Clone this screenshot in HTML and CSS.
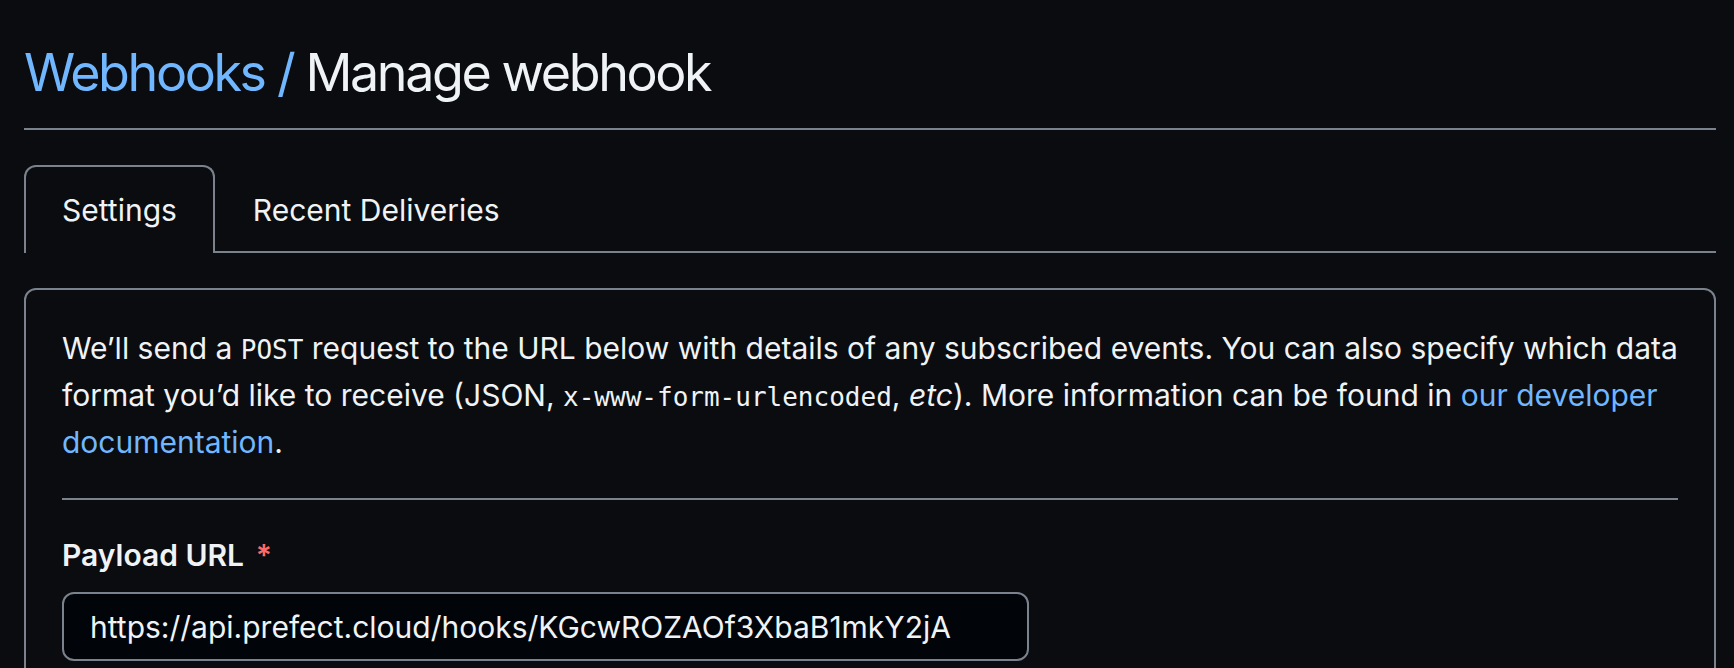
FILE: index.html
```html
<!DOCTYPE html>
<html lang="en">
<head>
<meta charset="utf-8">
<title>Manage webhook</title>
<link rel="stylesheet" href="styles.css">
</head>
<body>
<main class="page">
  <div class="subhead">
    <h2 class="subhead-heading"><a class="crumb" href="#">Webhooks</a><span class="crumb-sep"> / </span>Manage webhook</h2>
  </div>
  <nav class="tabnav">
    <a class="tab tab-selected" href="#">Settings</a>
    <a class="tab" href="#">Recent Deliveries</a>
  </nav>
  <section class="box">
    <p class="intro">We’ll send a <code>POST</code> request to the URL below with details of any subscribed events. You can also specify which data format you’d like to receive (JSON, <code>x-www-form-urlencoded</code>, <em>etc</em>). More information can be found in <a class="link" href="#">our developer documentation</a>.</p>
    <hr class="divider">
    <div class="form-group">
      <label class="form-label" for="url">Payload URL <span class="required">*</span></label>
      <input class="form-control" id="url" type="text" value="https://api.prefect.cloud/hooks/KGcwROZAOf3XbaB1mkY2jA">
    </div>
  </section>
</main>
</body>
</html>
```

FILE: styles.css
```css
html, body {
  margin: 0;
  padding: 0;
  background: #0a0c10;
  overflow: hidden;
}
body {
  color: #f0f3f6;
  font-family: Inter, "Noto Sans", "Liberation Sans", sans-serif;
  font-size: 30px;
  line-height: 45px;
}
.page {
  margin: 0 18px 0 24px;
}
.subhead {
  padding-top: 40px;
  padding-bottom: 23px;
  border-bottom: 2px solid #7a828e;
}
.subhead-heading {
  margin: 0;
  font-size: 52px;
  line-height: 65px;
  font-weight: 400;
  letter-spacing: -2.4px;
}
.crumb, .crumb-sep {
  color: #71b7ff;
  text-decoration: none;
}
.tabnav {
  display: flex;
  margin-top: 35px;
  border-bottom: 2px solid #7a828e;
}
.tab {
  display: block;
  padding: 18px 36px 16px;
  line-height: 50px;
  color: #f0f3f6;
  text-decoration: none;
  border: 2px solid transparent;
  border-bottom: 0;
  border-radius: 12px 12px 0 0;
  margin-bottom: -2px;
}
.tab-selected {
  border-color: #7a828e;
  background: #0a0c10;
  padding-bottom: 18px;
}
.box {
  margin-top: 35px;
  border: 2px solid #7a828e;
  border-radius: 12px;
  padding: 36px 36px 60px;
}
.intro {
  margin: 0;
}
code {
  font-family: "DejaVu Sans Mono", "Liberation Mono", monospace;
  font-size: 26px;
}
.link {
  color: #71b7ff;
  text-decoration: none;
}
.divider {
  margin: 33px 0 0;
  border: 0;
  height: 2px;
  background: #7a828e;
}
.form-group {
  margin-top: 33px;
}
.form-label {
  display: block;
  font-weight: 600;
  margin-bottom: 14px;
}
.required {
  color: #ff6a69;
  margin-left: 4px;
}
.form-control {
  display: block;
  box-sizing: border-box;
  width: 967px;
  height: 69px;
  padding: 0 26px;
  background: #010409;
  color: #f0f3f6;
  border: 2px solid #7a828e;
  border-radius: 12px;
  font-family: inherit;
  font-size: 30px;
  outline: none;
}
```
